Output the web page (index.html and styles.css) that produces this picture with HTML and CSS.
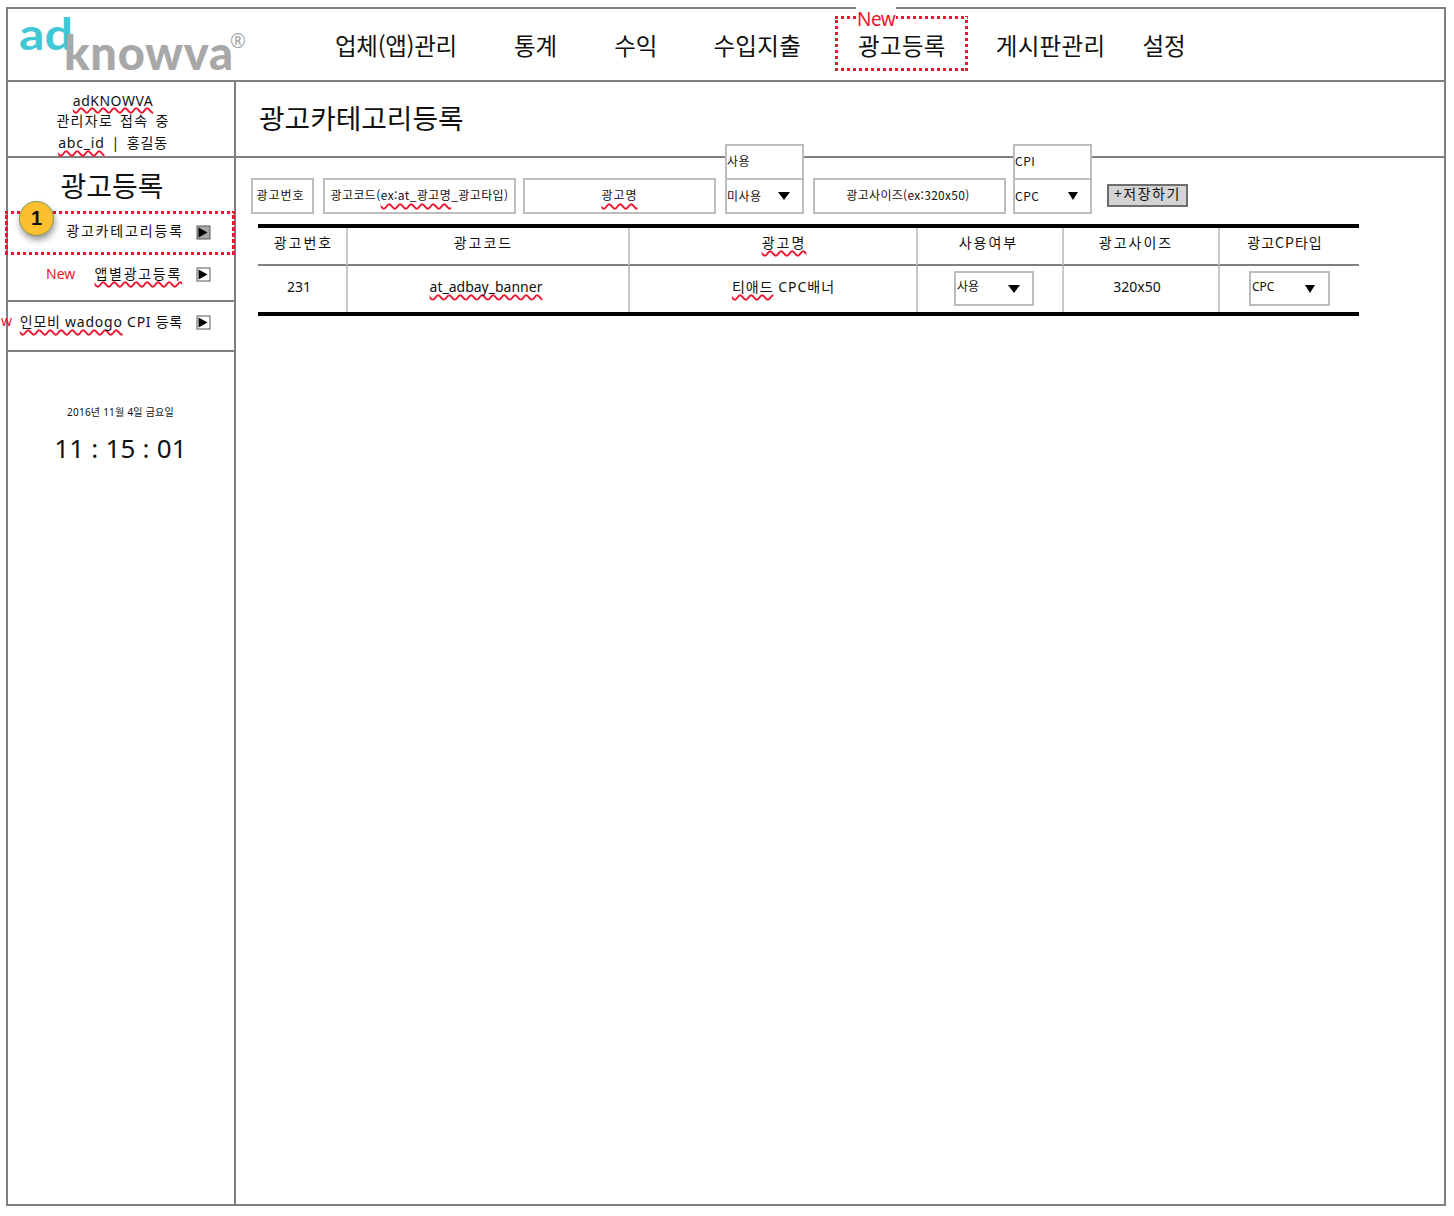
FILE: index.html
```html
<!DOCTYPE html>
<html lang="ko">
<head>
<meta charset="utf-8">
<title>광고카테고리등록</title>
<link rel="stylesheet" href="styles.css">
</head>
<body>
<div class="frame">
  <header class="top">
    <div class="logo"><span class="logo-ad">ad</span><span class="logo-kn">knowva</span><span class="logo-r">®</span></div>
    <nav class="nav">
      <span class="nav-first">업체(앱)관리</span>
      <span>통계</span>
      <span class="nav-profit">수익</span>
      <span class="nav-income">수입지출</span>
      <span class="nav-active"><i class="nav-new">New</i>광고등록</span>
      <span class="nav-board">게시판관리</span>
      <span>설정</span>
    </nav>
  </header>
  <div class="body">
    <aside class="side">
      <div class="user">
        <div class="u1"><span class="sq">adKNOWVA</span></div>
        <div class="u2">관리자로 접속 중</div>
        <div class="u3"><span class="sq">abc_id</span> &nbsp;|&nbsp; 홍길동</div>
      </div>
      <h2 class="side-title">광고등록</h2>
      <div class="item item-one">
        <span class="badge">1</span>
        <span class="item-label">광고카테고리등록</span>
        <svg class="tri" width="15" height="15" viewBox="0 0 15 15"><rect x="1" y="1" width="13" height="13" fill="#a6a6a6" stroke="#595959"/><path d="M2.5 2.5 L11.5 7.5 L2.5 12.5 Z" fill="#000"/></svg>
      </div>
      <div class="item item-two">
        <span class="new">New</span>
        <span class="item-label sq">앱별광고등록</span>
        <svg class="tri" width="15" height="15" viewBox="0 0 15 15"><rect x="1" y="1" width="13" height="13" fill="#fff" stroke="#595959"/><path d="M2.5 2.5 L11.5 7.5 L2.5 12.5 Z" fill="#000"/></svg>
      </div>
      <div class="item item-three">
        <span class="new new-cut">w</span>
        <span class="item-label"><span class="sq">인모비 wadogo</span> CPI 등록</span>
        <svg class="tri" width="15" height="15" viewBox="0 0 15 15"><rect x="1" y="1" width="13" height="13" fill="#fff" stroke="#595959"/><path d="M2.5 2.5 L11.5 7.5 L2.5 12.5 Z" fill="#000"/></svg>
      </div>
      <div class="clock">
        <div class="date">2016년 11월 4일 금요일</div>
        <div class="time">11 : 15 : 01</div>
      </div>
    </aside>
    <main class="main">
      <h1 class="page-title">광고카테고리등록</h1>
      <div class="form">
        <div class="fld f-num">광고번호</div>
        <div class="fld f-code">광고코드(<span class="sq">ex:at_광고명</span>_광고타입)</div>
        <div class="fld f-name"><span class="sq">광고명</span></div>
        <div class="sel">
          <div class="sel-up">사용</div>
          <div class="sel-val">미사용<b class="arrow"></b></div>
        </div>
        <div class="fld f-size">광고사이즈(ex:320x50)</div>
        <div class="sel sel-cp">
          <div class="sel-up">CPI</div>
          <div class="sel-val">CPC<b class="arrow"></b></div>
        </div>
        <div class="save">+저장하기</div>
      </div>
      <div class="table">
        <div class="cell head c1h">광고번호</div>
        <div class="cell head c2h">광고코드</div>
        <div class="cell head c3h"><span class="sq">광고명</span></div>
        <div class="cell head c4h">사용여부</div>
        <div class="cell head c5h">광고사이즈</div>
        <div class="cell head c6h">광고CP타입</div>
        <div class="cell c1d">231</div>
        <div class="cell c2d"><span class="sq">at_adbay_banner</span></div>
        <div class="cell c3d"><span><span class="sq">티애드</span> CPC배너</span></div>
        <div class="cell"><div class="mini mini-use">사용<b class="arrow"></b></div></div>
        <div class="cell c5d">320x50</div>
        <div class="cell"><div class="mini mini-cp">CPC<b class="arrow"></b></div></div>
      </div>
    </main>
  </div>
</div>
</body>
</html>
```

FILE: styles.css
```css
* { box-sizing: border-box; }
html, body { margin: 0; padding: 0; background: #fff; }
body {
  width: 1454px;
  height: 1216px;
  padding: 7px 8px 10px 6px;
  overflow: hidden;
  font-family: "Noto Sans", "Noto Sans CJK KR", sans-serif;
  color: #111;
}
.frame {
  width: 100%;
  height: 1199px;
  border: 2px solid #808080;
  display: flex;
  flex-direction: column;
}
.top {
  height: 73px;
  flex: none;
  border-bottom: 2px solid #808080;
  position: relative;
  display: flex;
  align-items: center;
}
.logo { width: 327px; height: 71px; flex: none; position: relative; }
.logo-ad {
  position: absolute; left: 11px; top: -8px;
  font: 700 44px/64px Lato, sans-serif;
  color: #41c8d6;
  transform: scaleX(1.14);
  transform-origin: left center;
}
.logo-kn {
  position: absolute; left: 56px; top: 15px;
  font: 900 47px/56px Lato, sans-serif;
  color: #a8a8a8;
  letter-spacing: .7px;
}
.logo-r {
  position: absolute; left: 222px; top: 19px;
  font: 400 19px/26px "Noto Sans", sans-serif;
  color: #a8a8a8;
}
.nav {
  display: flex;
  align-items: center;
  gap: 57px;
  font-family: "Noto Sans CJK KR", sans-serif;
  font-size: 23.5px;
  line-height: 30px;
}
.nav span { white-space: nowrap; display: block; flex: none; }
.nav-first { letter-spacing: -.3px; margin-right: 0; }
.nav-profit { margin-right: -1px; }
.nav-income { letter-spacing: .3px; margin-right: 0; }
.nav-active { position: relative; letter-spacing: .3px; }
.nav-active::before {
  content: "";
  position: absolute;
  left: -23px; right: -22px; top: -14px; bottom: -11px;
  background:
    repeating-linear-gradient(90deg, #f0142e 0 3.5px, transparent 3.5px 6px) top / 100% 3px no-repeat,
    repeating-linear-gradient(90deg, #f0142e 0 3.5px, transparent 3.5px 6px) bottom / 100% 3px no-repeat,
    repeating-linear-gradient(0deg, #f0142e 0 3.5px, transparent 3.5px 6px) left / 3px 100% no-repeat,
    repeating-linear-gradient(0deg, #f0142e 0 3.5px, transparent 3.5px 6px) right / 3px 100% no-repeat;
}
.nav-new {
  position: absolute; left: -2px; top: -23px;
  font: 400 19px/24px "Noto Sans", sans-serif;
  color: #f0142e;
  background: #fff;
  letter-spacing: -.5px;
  padding: 0 1px;
}
.nav-board { letter-spacing: .3px; margin-left: -7px; margin-right: -20px; }
.body { flex: 1; display: flex; min-height: 0; }
.side {
  width: 228px;
  flex: none;
  border-right: 2px solid #808080;
}
.user {
  height: 76px;
  border-bottom: 2px solid #808080;
  padding-top: 9px;
  padding-right: 16px;
  text-align: center;
  font-size: 14px;
  line-height: 20px;
}
.u1 { letter-spacing: .5px; }
.u1 .sq { text-underline-offset: 1px; }
.u2 { letter-spacing: 1.3px; word-spacing: 2px; }
.u3 { margin-top: 2px; letter-spacing: .8px; word-spacing: -1px; }
.sq {
  text-decoration: underline wavy #f0142e 1.5px;
  text-underline-offset: 2px;
  text-decoration-skip-ink: none;
}
.side-title {
  margin: 0;
  height: 53px;
  padding-top: 8px;
  padding-right: 18px;
  text-align: center;
  font: 400 28px/38px "Noto Sans CJK KR", sans-serif;
}
.item {
  display: flex;
  align-items: center;
  position: relative;
  font-size: 14px;
  padding-right: 23px;
  justify-content: flex-end;
}
.item-label { white-space: nowrap; }
.tri { flex: none; margin-left: 14px; }
.item-one {
  height: 44px;
  margin-left: -3px;
  width: 230px;
  padding-right: 24px;
  background:
    repeating-linear-gradient(90deg, #f0142e 0 3.5px, transparent 3.5px 6px) top / 100% 3px no-repeat,
    repeating-linear-gradient(90deg, #f0142e 0 3.5px, transparent 3.5px 6px) bottom / 100% 3px no-repeat,
    repeating-linear-gradient(0deg, #f0142e 0 3.5px, transparent 3.5px 6px) left / 3px 100% no-repeat,
    repeating-linear-gradient(0deg, #f0142e 0 3.5px, transparent 3.5px 6px) right / 3px 100% no-repeat;
}
.item-one .item-label { letter-spacing: 1.85px; margin-top: -7px; margin-right: -2px; }
.item-one .tri { margin-top: -1px; }
.item-two { height: 47px; border-bottom: 2px solid #808080; align-items: flex-start; padding-top: 8px; }
.item-two .item-label { letter-spacing: 1.7px; margin-right: 0; }
.item-two .tri { margin-top: 4px; }
.item-three { height: 50px; border-bottom: 2px solid #808080; align-items: flex-start; padding-top: 9px; }
.item-three .item-label { letter-spacing: .75px; margin-right: -1px; }
.item-three .tri { margin-top: 4px; }
.badge {
  position: absolute;
  left: 14px; top: -10px;
  width: 35px; height: 35px;
  border-radius: 50%;
  background: #fcbf2e;
  border: 1px solid #7f9a52;
  box-shadow: 1px 4px 6px rgba(0,0,0,.4);
  text-align: center;
  font: 700 20px/32px "Liberation Sans", sans-serif;
  color: #111;
}
.new {
  position: absolute;
  left: 38px; top: 9px;
  color: #f0142e;
  font-size: 14px;
  line-height: 20px;
}
.new-cut { left: -7px; top: 9px; }
.clock { text-align: center; padding-top: 52px; padding-right: 1px; }
.date { font: 400 10px/16px "Noto Sans", "Noto Sans CJK KR", sans-serif; letter-spacing: .25px; }
.time { margin-top: 10px; font: 400 26px/36px "Noto Sans", sans-serif; letter-spacing: .2px; }
.main { flex: 1; position: relative; min-width: 0; }
.page-title {
  margin: 0;
  height: 76px;
  border-bottom: 2px solid #808080;
  padding: 16px 0 0 23px;
  font: 400 27.8px/38px "Noto Sans CJK KR", sans-serif;
}
.form {
  display: flex;
  align-items: flex-start;
  margin: 20px 0 0 15px;
  font-size: 12px;
  font-family: "Noto Sans CJK KR", "Noto Sans", sans-serif;
}
.fld {
  height: 36px;
  border: 2px solid #bdbdbd;
  display: flex;
  align-items: center;
  justify-content: center;
  white-space: nowrap;
  line-height: 16px;
  padding-bottom: 2px;
  width: 193px;
}
.fld .sq { text-underline-offset: 3px; }
.f-num { width: 63px; margin-right: 9px; letter-spacing: 1px; padding-right: 4px; }
.f-code { margin-right: 7px; letter-spacing: .4px; }
.f-name { margin-right: 9px; letter-spacing: 1px; }
.f-size { margin-right: 7px; letter-spacing: .3px; padding-right: 3px; }
.sel { width: 79px; flex: none; position: relative; height: 36px; margin-right: 9px; letter-spacing: .5px; }
.sel-up {
  position: absolute; left: 0; right: 0; top: -34px; height: 36px;
  border: 2px solid #bdbdbd;
  background: #fff;
  padding: 7px 0 0 0;
  line-height: 16px;
}
.sel-val {
  height: 36px;
  border: 2px solid #bdbdbd;
  position: relative;
  background: #fff;
  padding: 8px 0 0 0;
  line-height: 16px;
}
.arrow {
  position: absolute; right: 12px; top: 12px;
  border-left: 6px solid transparent;
  border-right: 6px solid transparent;
  border-top: 8px solid #000;
  width: 0; height: 0;
}
.sel-cp { margin-right: 15px; }
.sel-cp .arrow { border-left-width: 5.5px; border-right-width: 5.5px; }
.save {
  margin-top: 6px;
  width: 81px; height: 23px;
  background: #d4d4d4;
  border: 2px solid #6e6e6e;
  text-align: center;
  font-size: 14px;
  line-height: 15px;
  letter-spacing: 1.5px;
}
.table {
  margin: 10px 0 0 22px;
  width: 1101px;
  display: grid;
  grid-template-columns: 88px 282px 288px 146px 156px 141px;
  grid-template-rows: 38px 46px;
  border-top: 4px solid #000;
  border-bottom: 4px solid #000;
  font-size: 14px;
}
.cell {
  display: flex;
  align-items: center;
  justify-content: center;
  border-left: 2px solid #c8c8c8;
  white-space: nowrap;
  padding-bottom: 6px;
}
.cell:nth-child(6n+1) { border-left: 0; }
.head {
  border-bottom: 2px solid #808080;
  font-family: "Noto Sans CJK KR", sans-serif;
  letter-spacing: 2px;
  padding-bottom: 8px;
}
.c1h { padding-left: 3px; }
.c2h { padding-right: 9px; }
.c3h { padding-left: 22px; }
.c4h { padding-right: 3px; }
.c5h { padding-right: 10px; }
.c6h { padding-right: 9px; letter-spacing: 1px; }
.c1d { padding-right: 6px; }
.c2d { padding-right: 4px; }
.c3d { padding-left: 21px; letter-spacing: 1px; }
.c5d { padding-right: 8px; }
.mini {
  width: 80px; height: 35px;
  border: 2px solid #bdbdbd;
  position: relative;
  font-size: 12px;
  padding: 6px 0 0 1px;
  line-height: 16px;
  background: #fff;
  margin-top: 4px;
}
.mini-use { margin-left: 8px; }
.mini-cp { width: 81px; padding-left: 1px; }
.mini-cp .arrow { right: 13px; border-left-width: 5px; border-right-width: 5px; }
```
